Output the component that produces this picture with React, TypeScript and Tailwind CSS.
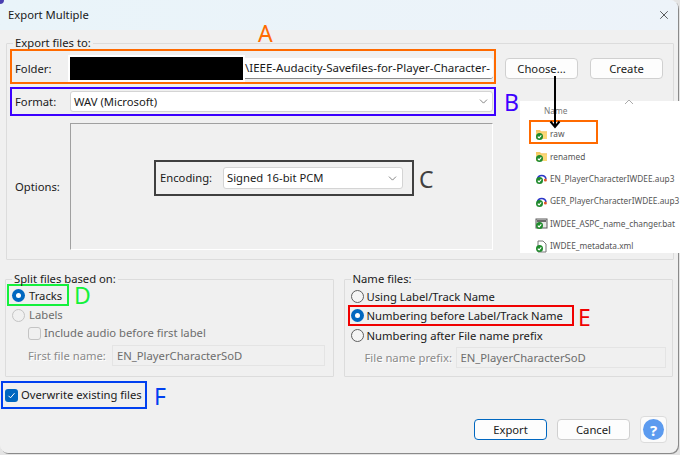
import type { ReactNode } from "react";
import { ChevronDown, X } from "lucide-react";

function Radio({ state = "off" }: { state?: "on" | "off" | "disabled" }) {
  if (state === "on") {
    return (
      <span className="flex h-[13px] w-[13px] flex-none items-center justify-center rounded-full bg-[#0067c0]">
        <span className="h-[5px] w-[5px] rounded-full bg-white" />
      </span>
    );
  }
  return (
    <span
      className={
        state === "disabled"
          ? "h-[13px] w-[13px] flex-none rounded-full border border-[#c4c4c4] bg-[#f0f0f0]"
          : "h-[13px] w-[13px] flex-none rounded-full border border-[#5f5f5f] bg-[#f5f5f5]"
      }
    />
  );
}

function Btn({ children, primary }: { children: ReactNode; primary?: boolean }) {
  return (
    <button
      className={
        primary
          ? "h-[21px] w-[73px] rounded-[4px] border border-[#0067c0] bg-[#fdfdfd] text-[#1a1a1a]"
          : "h-[21px] w-[73px] rounded-[4px] border border-[#d0d0d0] bg-[#fdfdfd] text-[#1a1a1a]"
      }
    >
      {children}
    </button>
  );
}

function Badge() {
  return (
    <g>
      <circle cx="4.5" cy="8.5" r="3.5" fill="#1f8a2c" />
      <path d="M2.8 8.6l1.3 1.3 2.2-2.5" stroke="#fff" strokeWidth="1.1" fill="none" />
    </g>
  );
}

function FileIcon({ kind }: { kind: "folder" | "audio" | "bat" | "xml" }) {
  return (
    <svg width="13" height="13" viewBox="0 0 13 13" className="flex-none">
      {kind === "folder" && (
        <>
          <path d="M1 2h4l1 1.2h6V11H1z" fill="#f5c862" />
          <path d="M1 4.4h11V11H1z" fill="#fbd878" />
        </>
      )}
      {kind === "audio" && (
        <>
          <path d="M2.4 7A4.4 4.4 0 0 1 11 7" stroke="#2a35c8" strokeWidth="1.6" fill="none" />
          <circle cx="10.4" cy="8" r="1.5" fill="#e0552a" />
        </>
      )}
      {kind === "bat" && (
        <>
          <rect x="1" y="2" width="11" height="9" fill="#e8e8e8" stroke="#5a5a5a" />
          <rect x="2" y="3" width="9" height="2" fill="#6a6a6a" />
        </>
      )}
      {kind === "xml" && <path d="M3 1h5l3 3v8H3z" fill="#fff" stroke="#777" />}
      <Badge />
    </svg>
  );
}

const explorerRows: { name: string; kind: "folder" | "audio" | "bat" | "xml" }[] = [
  { name: "raw", kind: "folder" },
  { name: "renamed", kind: "folder" },
  { name: "EN_PlayerCharacterIWDEE.aup3", kind: "audio" },
  { name: "GER_PlayerCharacterIWDEE.aup3", kind: "audio" },
  { name: "IWDEE_ASPC_name_changer.bat", kind: "bat" },
  { name: "IWDEE_metadata.xml", kind: "xml" },
];

function Letter({ children, className }: { children: ReactNode; className: string }) {
  return <span className={"absolute text-[23px] leading-[18px] " + className}>{children}</span>;
}

export default function App() {
  return (
    <div className="relative h-[455px] w-[680px] overflow-hidden whitespace-nowrap bg-[#e4e4e4] font-['Noto_Sans','Open_Sans',sans-serif] text-[11.25px] leading-4 text-[#1a1a1a]">
      <span className="absolute left-0 top-0 h-[4px] w-[4px] rounded-br-[4px] bg-[#4a3fb0]" />
      <div className="flex h-[453px] w-[678px] flex-col overflow-hidden rounded-b-[8px] rounded-tr-[8px] bg-[#f0f0f0] shadow-[1px_1px_0_#8a8a8a]">
        <div className="flex h-[30px] flex-none items-center justify-between bg-gradient-to-r from-[#e9f4f9] to-[#edf3f9] pl-2 pr-[7px]">
          <span>Export Multiple</span>
          <X size={14} strokeWidth={1.2} />
        </div>

        <div className="flex-1 px-[5px] pt-[5px]">
          <fieldset className="ml-px h-[225px] w-[668px] rounded-[1px] border border-[#dcdcdc]">
            <legend className="ml-[6px] h-4 px-[2px]">Export files to:</legend>

            <div className="-mt-[2px] flex items-start">
              <div className="ml-[3px] flex h-[35px] w-[486px] flex-none items-center border-2 border-[#ff6a00] pr-px pt-[4px]">
                <span className="w-[58px] flex-none pl-[3px]">Folder:</span>
                <div className="flex h-[21px] flex-1 items-center rounded-[3px] border-b border-[#8a8a8a] bg-white">
                  <span className="-ml-[2px] h-[27px] w-[177px] flex-none border-2 border-white bg-black" />
                  <span className="text-[11.5px]">\IEEE-Audacity-Savefiles-for-Player-Character-</span>
                </div>
              </div>
              <div className="ml-[9px] mt-[9px] flex gap-[12px]">
                <Btn>Choose...</Btn>
                <Btn>Create</Btn>
              </div>
            </div>

            <div className="ml-[3px] mt-[3px] flex h-[29px] w-[486px] items-center border-2 border-[#3c00ff] pr-px">
              <span className="w-[58px] flex-none pl-[3px]">Format:</span>
              <div className="flex h-[21px] flex-1 items-center justify-between rounded-[3px] border border-[#d4d4d4] bg-white pl-[3px] pr-[2px]">
                <span>WAV (Microsoft)</span>
                <ChevronDown size={13} strokeWidth={1.2} className="text-[#444]" />
              </div>
            </div>

            <div className="ml-[8px] mt-[7px] flex items-center">
              <span className="w-[55px] flex-none">Options:</span>
              <div className="h-[127px] w-[423px] border border-b-white border-l-[#a0a0a0] border-r-white border-t-[#a0a0a0] pl-[83px] pt-[36px]">
                <div className="flex h-9 w-[260px] items-center border-2 border-[#404040] pl-1">
                  <span className="w-[63px] flex-none">Encoding:</span>
                  <div className="flex h-[22px] w-[180px] flex-none items-center justify-between rounded-[3px] border border-[#d4d4d4] bg-white pl-[3px] pr-[3px]">
                    <span>Signed 16-bit PCM</span>
                    <ChevronDown size={13} strokeWidth={1.2} className="text-[#444]" />
                  </div>
                </div>
              </div>
            </div>
          </fieldset>

          <div className="mt-[11px] flex gap-[10px]">
            <fieldset className="h-[106px] w-[329px] rounded-[1px] border border-[#dcdcdc]">
              <legend className="ml-[6px] h-4 px-[2px]">Split files based on:</legend>
              <div className="-mt-[3px] ml-[1px] flex h-[22px] w-[62px] items-center gap-[4px] border-2 border-[#14f03c] pl-[3px]">
                <Radio state="on" />
                <span className="pt-[2px]">Tracks</span>
              </div>
              <div className="ml-[6px] mt-[1px] flex h-[16px] items-center gap-[4px] text-[#6d6d6d]">
                <Radio state="disabled" />
                <span>Labels</span>
              </div>
              <div className="ml-[22px] mt-[2px] flex h-[16px] items-center gap-[3px] text-[#6d6d6d]">
                <span className="h-[13px] w-[13px] flex-none rounded-[3px] border border-[#c4c4c4] bg-[#f0f0f0]" />
                <span>Include audio before first label</span>
              </div>
              <div className="ml-[22px] mt-[4px] flex items-center text-[#8a8a8a]">
                <span className="w-[84px] flex-none [text-shadow:1px_1px_0_#fff]">First file name:</span>
                <div className="flex h-[21px] w-[213px] flex-none items-center border border-[#e4e4e4] pl-[4px] text-[#6d6d6d]">
                  EN_PlayerCharacterSoD
                </div>
              </div>
            </fieldset>

            <fieldset className="h-[106px] w-[330px] rounded-[1px] border border-[#dcdcdc]">
              <legend className="ml-[6px] h-4 px-[2px]">Name files:</legend>
              <div className="ml-[6px] flex h-[19px] items-center gap-[3px]">
                <Radio />
                <span>Using Label/Track Name</span>
              </div>
              <div className="-mt-px ml-[3px] flex h-[21px] w-[226px] items-center gap-[3px] border-2 border-[#f00000] pl-px">
                <Radio state="on" />
                <span>Numbering before Label/Track Name</span>
              </div>
              <div className="ml-[6px] flex h-[19px] items-center gap-[3px]">
                <Radio />
                <span>Numbering after File name prefix</span>
              </div>
              <div className="ml-[20px] mt-[2px] flex items-center text-[#8a8a8a]">
                <span className="w-[91px] flex-none [text-shadow:1px_1px_0_#fff]">File name prefix:</span>
                <div className="flex h-[21px] w-[210px] flex-none items-center border border-[#e4e4e4] pl-[4px] text-[#6d6d6d]">
                  EN_PlayerCharacterSoD
                </div>
              </div>
            </fieldset>
          </div>

          <div className="-ml-[4px] mt-[4px] flex h-[28px] w-[146px] items-center gap-[3px] border-2 border-[#0040f0] pl-[2px]">
            <span className="flex h-[13px] w-[13px] flex-none items-center justify-center rounded-[3px] bg-[#0067c0]">
              <svg width="9" height="9" viewBox="0 0 9 9">
                <path d="M1.5 4.8l2 2 4-4.6" stroke="#fff" strokeWidth="1" fill="none" />
              </svg>
            </span>
            <span>Overwrite existing files</span>
          </div>

          <div className="mt-[7px] flex items-center justify-end gap-[10px] pr-[6px]">
            <Btn primary>Export</Btn>
            <Btn>Cancel</Btn>
            <button className="flex h-[27px] w-[27px] items-center justify-center rounded-[4px] border border-[#dcdcdc] bg-[#fbfbfb]">
              <span className="flex h-[21px] w-[21px] items-center justify-center rounded-full bg-[#5c9bef] text-[15px] font-bold text-white">
                ?
              </span>
            </button>
          </div>
        </div>
      </div>

      <div className="absolute left-[520px] top-[101px] h-[152px] w-[160px] bg-white text-[8.3px] text-[#555]">
        <span className="absolute left-[24px] top-[2px] text-[#777]">Name</span>
        <div className="flex flex-col pl-[15px] pt-[22px]">
          {explorerRows.map((row) => (
            <div key={row.name} className="flex h-[22.4px] items-center gap-[2px]">
              <FileIcon kind={row.kind} />
              <span>{row.name}</span>
            </div>
          ))}
        </div>
        <span className="absolute left-[9px] top-[19px] h-[24px] w-[69px] border-2 border-[#ff6a00]" />
      </div>

      <svg className="absolute left-[548px] top-[74px]" width="14" height="56" viewBox="0 0 14 56">
        <path d="M7 2v51M2.5 47.5L7 53l4.5-5.5" stroke="#000" strokeWidth="2" fill="none" />
      </svg>
      <svg className="absolute left-[624px] top-[99px]" width="10" height="6" viewBox="0 0 10 6">
        <path d="M1 5l4-4 4 4" stroke="#aaa" fill="none" />
      </svg>

      <Letter className="left-[258px] top-[24px] text-[#ff6a00]">A</Letter>
      <Letter className="left-[504px] top-[93px] text-[#3c00ff]">B</Letter>
      <Letter className="left-[419px] top-[170px] text-[#404040]">C</Letter>
      <Letter className="left-[74px] top-[286px] text-[#14f03c]">D</Letter>
      <Letter className="left-[578px] top-[308px] text-[#f00000]">E</Letter>
      <Letter className="left-[154px] top-[387px] text-[#0040f0]">F</Letter>
    </div>
  );
}
